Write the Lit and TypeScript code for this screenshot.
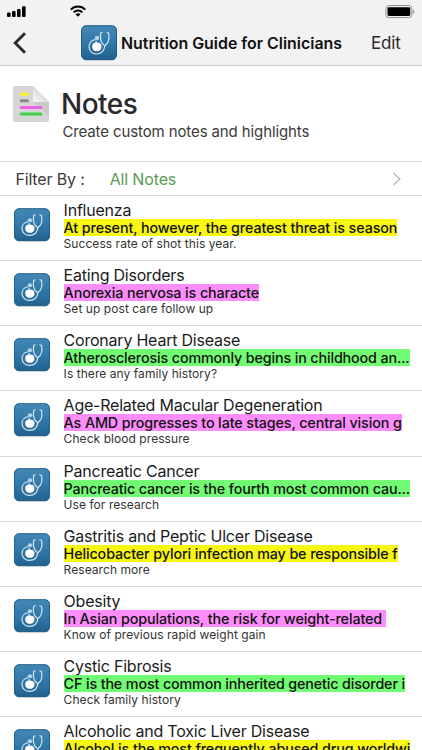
import { LitElement, html, css, svg } from 'lit'
import { customElement, property } from 'lit/decorators.js'

type Note = { title: string; quote: string; comment: string; color: string }

const NOTES: Note[] = [
  { title: 'Influenza', quote: 'At present, however, the greatest threat is season', comment: 'Success rate of shot this year.', color: 'yellow' },
  { title: 'Eating Disorders', quote: 'Anorexia nervosa is characte', comment: 'Set up post care follow up', color: 'pink' },
  { title: 'Coronary Heart Disease', quote: 'Atherosclerosis commonly begins in childhood an...', comment: 'Is there any family history?', color: 'green' },
  { title: 'Age-Related Macular Degeneration', quote: 'As AMD progresses to late stages, central vision g', comment: 'Check blood pressure', color: 'pink' },
  { title: 'Pancreatic Cancer', quote: 'Pancreatic cancer is the fourth most common cau...', comment: 'Use for research', color: 'green' },
  { title: 'Gastritis and Peptic Ulcer Disease', quote: 'Helicobacter pylori infection may be responsible f', comment: 'Research more', color: 'yellow' },
  { title: 'Obesity', quote: 'In Asian populations, the risk for weight-related ', comment: 'Know of previous rapid weight gain', color: 'pink' },
  { title: 'Cystic Fibrosis', quote: 'CF is the most common inherited genetic disorder i', comment: 'Check family history', color: 'green' },
  { title: 'Alcoholic and Toxic Liver Disease', quote: 'Alcohol is the most frequently abused drug worldwi', comment: '', color: 'yellow' },
]

@customElement('guide-icon')
export class GuideIcon extends LitElement {
  static styles = css`
    :host { display: block; width: 36px; height: 36px; }
    svg { display: block; width: 100%; height: 100%; }
  `

  render() {
    return html`
      <svg viewBox="0 0 36 36" fill="none" preserveAspectRatio="none">
        <defs>
          <linearGradient id="bg" x1="0" y1="0" x2="0" y2="1">
            <stop offset="0" stop-color="#4488b5" />
            <stop offset="0.5" stop-color="#3179a9" />
            <stop offset="1" stop-color="#22628f" />
          </linearGradient>
        </defs>
        <rect x="0.5" y="1.3" width="35" height="34.2" rx="4.5" fill="#9fb4c2" />
        <rect x="0.5" y="0.7" width="35" height="33.8" rx="4.5" fill="url(#bg)" stroke="#235d87" />
        <g stroke="#d3e6f2" stroke-linecap="round" stroke-linejoin="round">
          <path d="M14 14.6C10.4 15.2 7.8 18.2 8 22C8.3 26.3 11.5 29.1 15.4 29C20.4 28.8 23.4 25.6 23.8 20.8" stroke-width="1.2" />
          <path d="M21.2 7.2L19.6 8C19 13 19.8 18.6 23.7 20.8C27.3 18.6 28.4 13 27.6 8L25.9 7.2" stroke-width="1.2" />
        </g>
        <circle cx="16" cy="13" r="2.2" fill="#b5d5ea" />
        <path d="M15.7 18.2C13.4 16.9 11.1 18.5 11.2 21.4C11.3 24.9 13.6 26.8 15.7 26.1C18 26.8 20.5 24.9 20.5 21.4C20.5 18.5 18 16.9 15.7 18.2Z" fill="#fff" />
        <path d="M15.7 18.2L14.8 16.2" stroke="#fff" stroke-width="1.3" />
      </svg>
    `
  }
}

@customElement('status-bar')
export class StatusBar extends LitElement {
  static styles = css`
    :host {
      display: flex;
      justify-content: space-between;
      height: 22px;
      padding: 5px 7px 0;
      box-sizing: border-box;
    }
    .left { display: flex; gap: 43px; }
    svg { display: block; }
  `

  render() {
    return html`
      <div class="left">
        <svg width="20" height="13" viewBox="0 0 20 13">
          ${[4.6, 6, 8, 10.8].map((h, i) => svg`
            <rect x=${i * 5} y=${12 - h} width="3.6" height=${h} rx="1" />
          `)}
        </svg>
        <svg width="16" height="13" viewBox="0 0 16 13" fill="none" stroke="#000" stroke-width="2">
          <path d="M0.8 4.6C4.8 0.4 11.2 0.4 15.2 4.6" />
          <path d="M3.6 7.4C6 5 10 5 12.4 7.4" />
          <path d="M8 11.8L5.5 9.3C6.9 8 9.1 8 10.5 9.3Z" fill="#000" stroke="none" />
        </svg>
      </div>
      <svg width="30" height="14" viewBox="0 0 30 14">
        <rect x="0.9" y="0.6" width="26" height="12" rx="3" fill="none" stroke="#8e8e8e" />
        <rect x="2.5" y="2.2" width="22.8" height="8.8" rx="1.4" />
        <path d="M28.2 4.9C29.6 5.2 29.6 8.2 28.2 8.5Z" fill="#777" />
      </svg>
    `
  }
}

@customElement('note-row')
export class NoteRow extends LitElement {
  @property({ attribute: false }) note!: Note

  static styles = css`
    :host {
      display: flex;
      gap: 13.6px;
      height: 65.17px;
      padding: 5px 12px 0 14px;
      box-sizing: border-box;
      border-bottom: 1px solid #d9d9db;
    }
    guide-icon { flex: none; margin-top: 6.6px; height: 34px; }
    .body { flex: 1; min-width: 0; }
    .title { font-size: 16px; line-height: 18px; color: #1b1b1b; letter-spacing: -0.22px; white-space: nowrap; }
    .quote {
      display: table;
      font-size: 14.3px;
      font-weight: 500;
      line-height: 17px;
      letter-spacing: -0.1px;
      color: #111;
      white-space: pre;
    }
    .green.quote { letter-spacing: -0.13px; }
    .comment { font-size: 12px; line-height: 15px; letter-spacing: 0.06px; color: #333; }
    .yellow { background: #f8f711; }
    .pink { background: #fc8dfb; }
    .green { background: #71fc73; }
  `

  render() {
    return html`
      <guide-icon></guide-icon>
      <div class="body">
        <div class="title">${this.note.title}</div>
        <div class="quote ${this.note.color}">${this.note.quote}</div>
        <div class="comment">${this.note.comment}</div>
      </div>
    `
  }
}

@customElement('app-root')
export class AppRoot extends LitElement {
  static styles = css`
    :host {
      display: block;
      width: 422px;
      height: 750px;
      overflow: hidden;
      background: #fff;
      font-family: Inter, "Liberation Sans", sans-serif;
    }
    svg { display: block; }

    .top { height: 66px; box-sizing: border-box; background: #f2f2f2; border-bottom: 1px solid #c6c6c8; }
    .nav { display: flex; align-items: center; height: 42px; padding: 0 21.5px 0 13px; }
    .brand { display: flex; align-items: center; gap: 4px; margin-left: 54px; }
    .brand guide-icon { margin-top: -1px; }
    .name { font-size: 15.9px; font-weight: 600; color: #111; white-space: nowrap; }
    .edit { margin-left: auto; font-size: 17px; letter-spacing: -0.2px; color: #2a2a2a; }

    .intro { display: flex; gap: 11px; height: 95px; padding: 19px 13px 0 12px; box-sizing: border-box; }
    .heading { font-size: 28px; line-height: 38px; font-weight: 550; letter-spacing: -0.5px; color: #2a2a2c; }
    .sub { font-size: 15px; line-height: 18px; letter-spacing: -0.11px; color: #3a3a3a; padding-left: 1.4px; }

    .filter {
      display: flex;
      align-items: center;
      height: 35px;
      padding: 0 20px 0 15.4px;
      box-sizing: border-box;
      border-top: 1px solid #d9d9db;
      border-bottom: 1px solid #d9d9db;
      font-size: 16px;
      letter-spacing: -0.15px;
      color: #3a3a3a;
    }
    .value { margin-left: 25px; color: #5b9a53; }
    .chevron { margin-left: auto; }
  `

  render() {
    return html`
      <div class="top">
        <status-bar></status-bar>
        <div class="nav">
          <svg width="14" height="22" viewBox="0 0 14 22" fill="none" stroke="#2b2b2b" stroke-width="2.9">
            <path d="M12 1.2L2.2 11L12 20.8" />
          </svg>
          <div class="brand">
            <guide-icon></guide-icon>
            <div class="name">Nutrition Guide for Clinicians</div>
          </div>
          <div class="edit">Edit</div>
        </div>
      </div>
      <div class="intro">
        <svg width="38" height="38" viewBox="0 0 38 38">
          <defs>
            <linearGradient id="fold" x1="0.1" y1="0.9" x2="0.6" y2="0.4">
              <stop offset="0" stop-color="#f6f6f6" />
              <stop offset="1" stop-color="#d6d6d6" />
            </linearGradient>
          </defs>
          <path d="M3 1H21L37 17V35Q37 37 35 37H3Q1 37 1 35V3Q1 1 3 1Z" fill="#d6d6d6" />
          <path d="M21 17H37V31Z" fill="#c9c9c9" />
          <path d="M21 1L37 17H23Q21 17 21 15Z" fill="url(#fold)" />
          <g stroke-width="3" stroke-linecap="round">
            <path d="M9.2 9.3H15.4" stroke="#f7f229" />
            <path d="M9.2 15.8H15.4" stroke="#8a8a8a" />
            <path d="M9.2 22.5H29" stroke="#ec62ea" />
            <path d="M9.2 29H29" stroke="#3fd447" />
          </g>
        </svg>
        <div>
          <div class="heading">Notes</div>
          <div class="sub">Create custom notes and highlights</div>
        </div>
      </div>
      <div class="filter">
        <div>Filter By :</div>
        <div class="value">All Notes</div>
        <svg class="chevron" width="10" height="14" viewBox="0 0 10 14" fill="none" stroke="#bcbcc0" stroke-width="1.6">
          <path d="M1.5 1L7.8 7L1.5 13" />
        </svg>
      </div>
      ${NOTES.map(note => html`<note-row .note=${note}></note-row>`)}
    `
  }
}
